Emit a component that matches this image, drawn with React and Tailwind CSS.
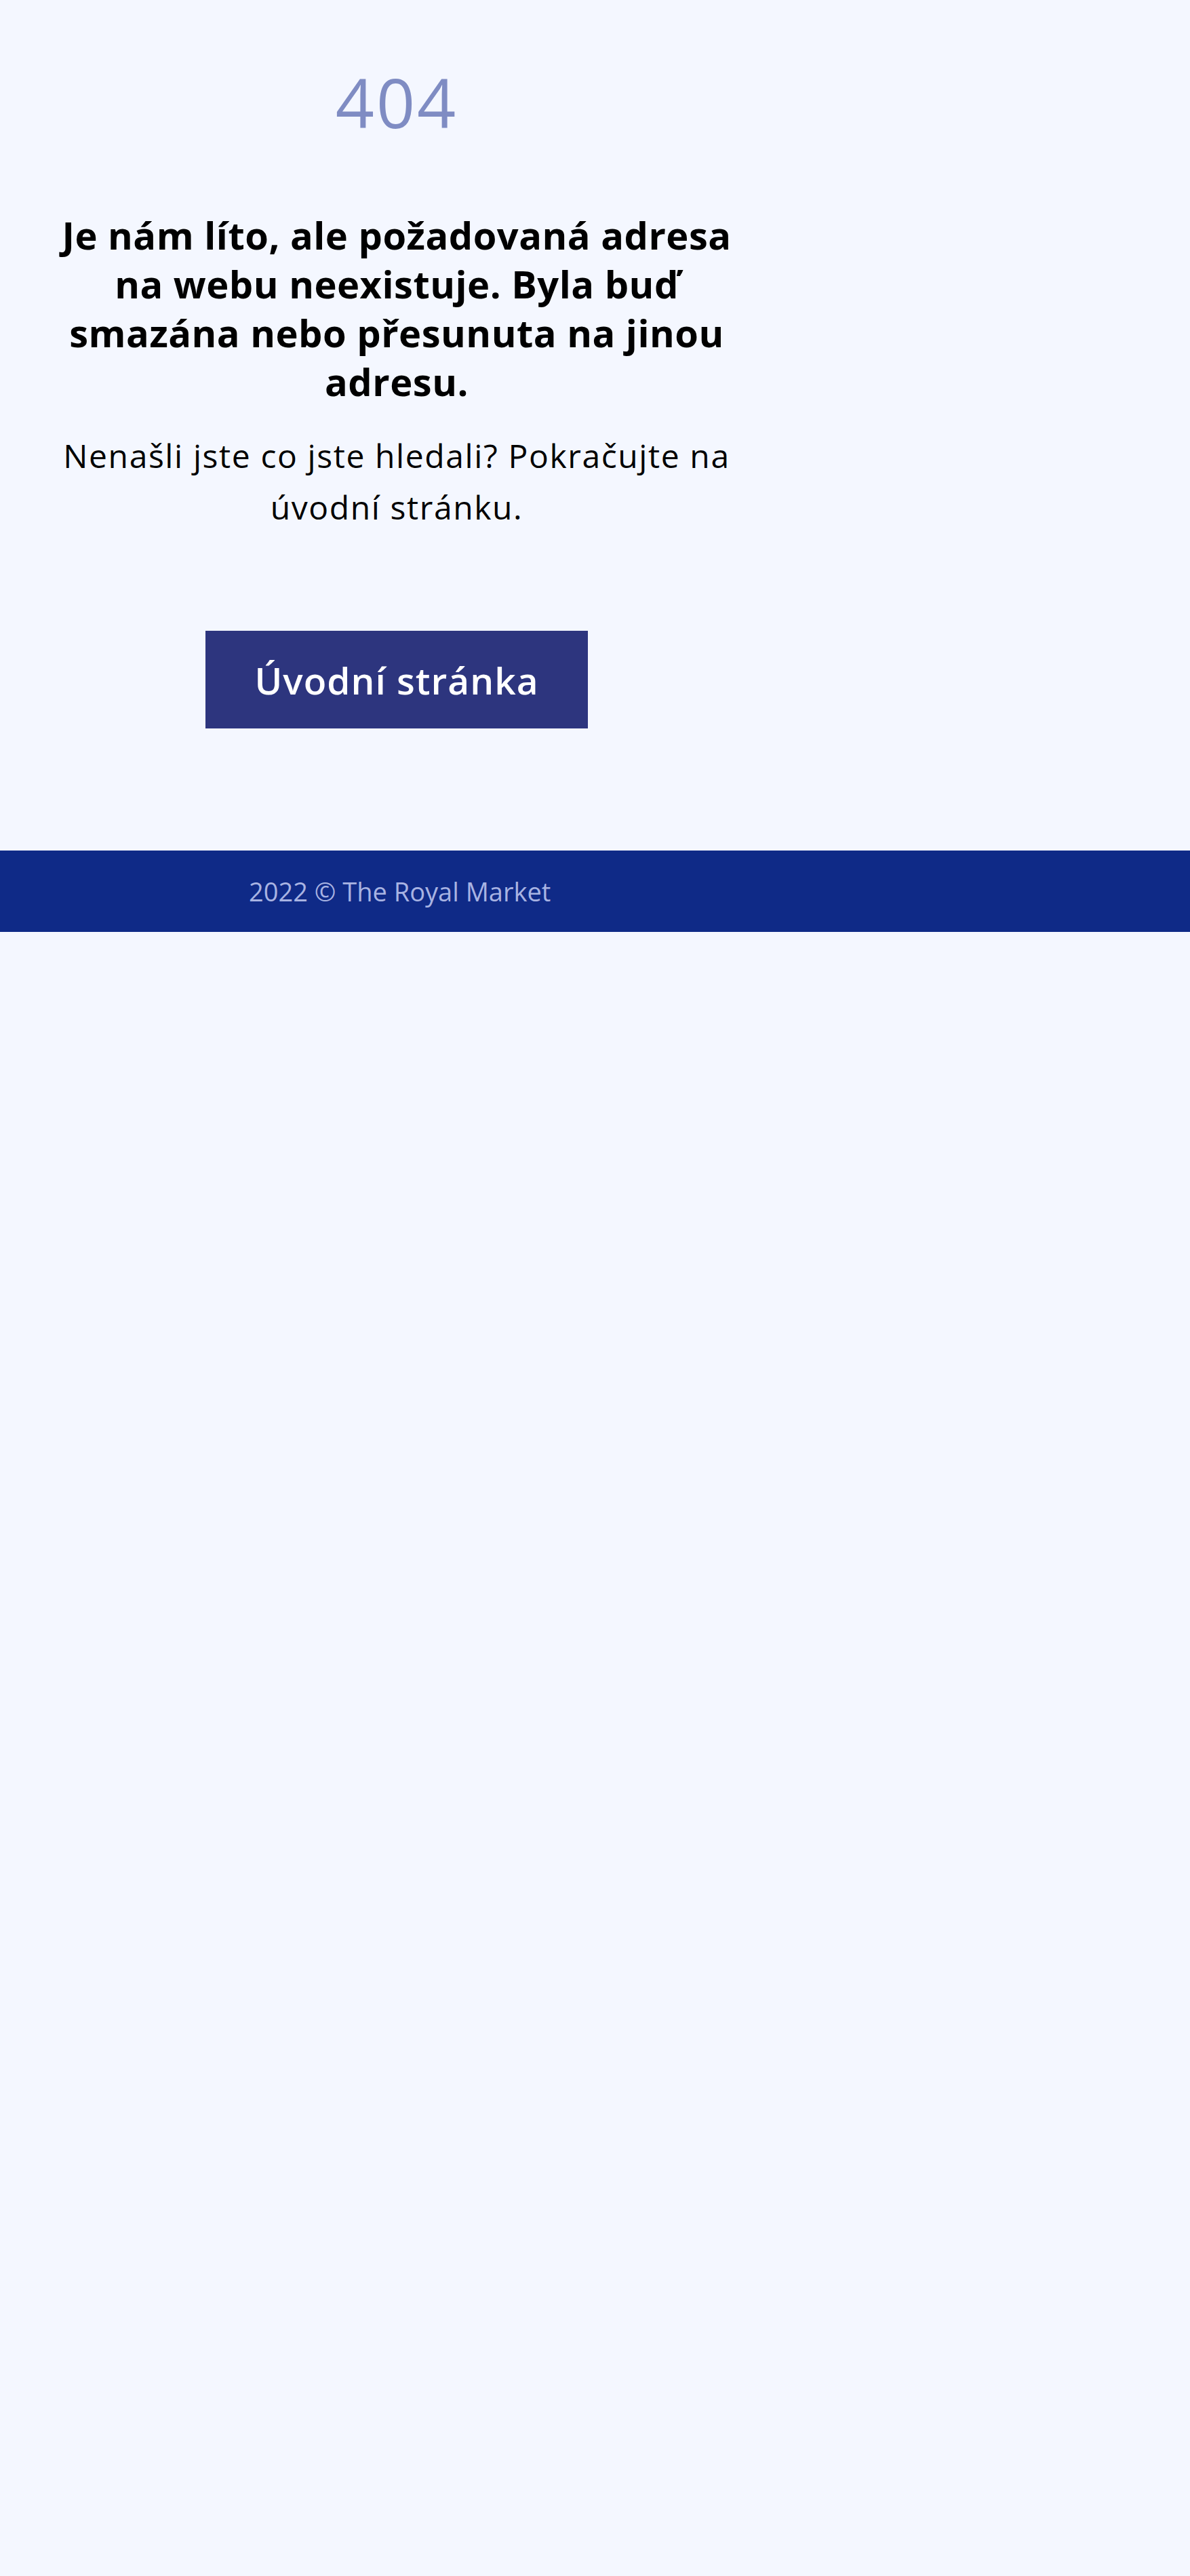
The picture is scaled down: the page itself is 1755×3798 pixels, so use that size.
export default function App() {
  return (
    <div
      className="min-h-screen bg-[#f4f7ff]"
      style={{ fontFamily: '"Open Sans", "Noto Sans", sans-serif' }}
    >
      <main className="w-[1170px] flex flex-col items-center text-center pt-[100px]">
        {/* Error code */}
        <h1 className="text-[100px] leading-none font-normal tracking-[3px] text-[#7f8cc3]">404</h1>

        <h2 className="mt-[110px] text-[56px] leading-[72px] font-bold tracking-[0.5px] text-black">
          Je nám líto, ale požadovaná adresa
          <br />
          na webu neexistuje. Byla buď
          <br />
          smazána nebo přesunuta na jinou
          <br />
          adresu.
        </h2>

        <p className="mt-[36px] text-[48px] leading-[76px] tracking-[1.6px] text-black">
          Nenašli jste co jste hledali? Pokračujte na
          <br />
          úvodní stránku.
        </p>

        <a
          href="#"
          className="mt-[144px] w-[564px] h-[144px] flex items-center justify-center bg-[#2d357e] text-white text-[55px] font-semibold tracking-[1px] leading-none"
        >
          Úvodní stránka
        </a>
      </main>

      <footer className="mt-[180px] h-[120px] bg-[#0f2a87] flex items-center pl-[367px]">
        <p className="text-[38px] leading-none text-[#a8b3e2]">2022 © The Royal Market</p>
      </footer>
    </div>
  )
}
